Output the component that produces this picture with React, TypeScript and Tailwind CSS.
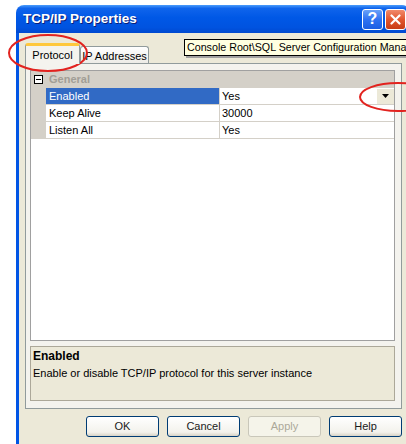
import type { ReactNode } from 'react'

const rows = [
  { name: 'Enabled', value: 'Yes', selected: true },
  { name: 'Keep Alive', value: '30000', selected: false },
  { name: 'Listen All', value: 'Yes', selected: false },
]

function DialogButton({ children, disabled }: { children: ReactNode; disabled?: boolean }) {
  return (
    <button
      type="button"
      disabled={disabled}
      className={
        disabled
          ? 'h-[21px] w-[73px] rounded-[3px] border border-[#c9c7ba] bg-[#f5f4ea] text-[11px] text-[#aca899]'
          : 'h-[21px] w-[73px] rounded-[3px] border border-[#003c74] bg-[linear-gradient(to_bottom,#ffffff,#f3f2ec_80%,#d8d3c6)] text-[11px] text-[#1a1a1a]'
      }
    >
      {children}
    </button>
  )
}

function PropertyRow({ name, value, selected }: { name: string; value: string; selected: boolean }) {
  return (
    <div className="flex h-[17px] border-b border-[#d4d0c8]">
      <div className="w-[15px] bg-[#d4d0c8]" />
      <div
        className={
          selected
            ? 'flex w-[174px] items-center border-r border-[#d4d0c8] bg-[#316ac5] pl-[3px] text-white'
            : 'flex w-[174px] items-center border-r border-[#d4d0c8] pl-[3px]'
        }
      >
        {name}
      </div>
      <div className="flex flex-1 items-center pl-[2px]">
        <span className="flex-1">{value}</span>
        {selected && (
          <span className="flex h-[15px] w-[17px] items-center justify-center bg-[#ece9d8]">
            <svg width="7" height="4" viewBox="0 0 7 4">
              <path d="M0 0h7L3.5 4z" fill="#000" />
            </svg>
          </span>
        )}
      </div>
    </div>
  )
}

export default function App() {
  return (
    <div className="relative h-[444px] w-[406px] overflow-hidden bg-white font-['Liberation_Sans',Arial,sans-serif] text-[11px] text-black">
      <div className="ml-[16px] mt-[5px] w-[394px]">
        {/* title bar */}
        <div className="flex h-[28px] items-center rounded-t-[8px] bg-[linear-gradient(to_bottom,#4a9cfb_0%,#0f64ec_12%,#0058e6_45%,#0053e0_80%,#0049d0_100%)] pl-[7px] pr-[4px]">
          <span className="flex-1 text-[13.5px] font-bold text-white [text-shadow:1px_1px_0_#0a1e78]">
            TCP/IP Properties
          </span>
          <div className="flex gap-[2px]">
            <span className="flex h-[21px] w-[21px] items-center justify-center rounded-[3px] border border-white bg-[linear-gradient(to_bottom,#6aa2f8,#2f72f2_50%,#1c5ee2)] text-[16px] font-bold leading-none text-white">
              ?
            </span>
            <span className="flex h-[21px] w-[21px] items-center justify-center rounded-[3px] border border-white bg-[linear-gradient(to_bottom,#f08a6c,#e2562e_50%,#c83c16)]">
              <svg width="11" height="11" viewBox="0 0 11 11">
                <path d="M1.5 1.5l8 8M9.5 1.5l-8 8" stroke="#fff" strokeWidth="2.2" strokeLinecap="round" />
              </svg>
            </span>
          </div>
        </div>

        {/* dialog body */}
        <div className="relative h-[411px] border-x-[3px] border-[#0055e5] bg-[#ece9d8] pl-[6px] pr-[5px] pt-[10px]">
          <div className="flex h-[20px] items-end">
            <div className="relative z-10 -mb-px flex h-[21px] w-[55px] items-center justify-center rounded-t-[3px] border-x border-t-[3px] border-x-[#919b9c] border-t-[#ffc83c] bg-[#f4f3ee]">
              Protocol
            </div>
            <div className="flex h-[17px] w-[69px] items-center justify-center rounded-t-[3px] border-x border-t border-[#919b9c] bg-[linear-gradient(to_bottom,#ffffff,#ecebe6)] pt-[2px]">
              IP Addresses
            </div>
          </div>

          <div className="absolute left-[165px] top-[6px] h-[17px] w-[260px] overflow-hidden whitespace-nowrap border border-black bg-[#ffffe1] pl-[2px] text-[10.7px] leading-[15px] shadow-[2px_2px_0_#a0a0a0]">
            {'Console Root\\SQL Server Configuration Manager'}
          </div>

          {/* tab page */}
          <div className="flex h-[346px] flex-col gap-[5px] border border-[#919b9c] bg-[#f4f3ee] pb-[7px] pl-[4px] pr-[6px] pt-[6px]">
            <div className="flex flex-1 flex-col border border-[#a0a0a0] bg-white">
              <div className="flex h-[17px] items-center border-b border-[#d4d0c8] bg-[#d4d0c8]">
                <span className="flex w-[15px] justify-center">
                  <svg width="9" height="9" viewBox="0 0 9 9">
                    <rect x="0.5" y="0.5" width="8" height="8" fill="#fff" stroke="#000" />
                    <path d="M2 4.5h5" stroke="#000" />
                  </svg>
                </span>
                <span className="pl-[3px] font-bold text-[#a19e96]">General</span>
              </div>
              {rows.map((row) => (
                <PropertyRow key={row.name} {...row} />
              ))}
            </div>

            <div className="h-[55px] border border-[#aca899] bg-[#ece9d8] pl-[2px] pt-[1px]">
              <div className="text-[12px] font-bold leading-[16px]">Enabled</div>
              <div className="leading-[18px]">Enable or disable TCP/IP protocol for this server instance</div>
            </div>
          </div>

          <div className="mt-[7px] flex justify-end gap-[8px]">
            <DialogButton>OK</DialogButton>
            <DialogButton>Cancel</DialogButton>
            <DialogButton disabled>Apply</DialogButton>
            <DialogButton>Help</DialogButton>
          </div>
        </div>
      </div>

      {/* red callout rings */}
      <svg className="pointer-events-none absolute left-0 top-0" width="406" height="444">
        <ellipse cx="48" cy="53" rx="39" ry="18" fill="none" stroke="#e2231f" strokeWidth="2" />
        <ellipse cx="398" cy="97" rx="38" ry="14" fill="none" stroke="#e2231f" strokeWidth="2" />
      </svg>
    </div>
  )
}
